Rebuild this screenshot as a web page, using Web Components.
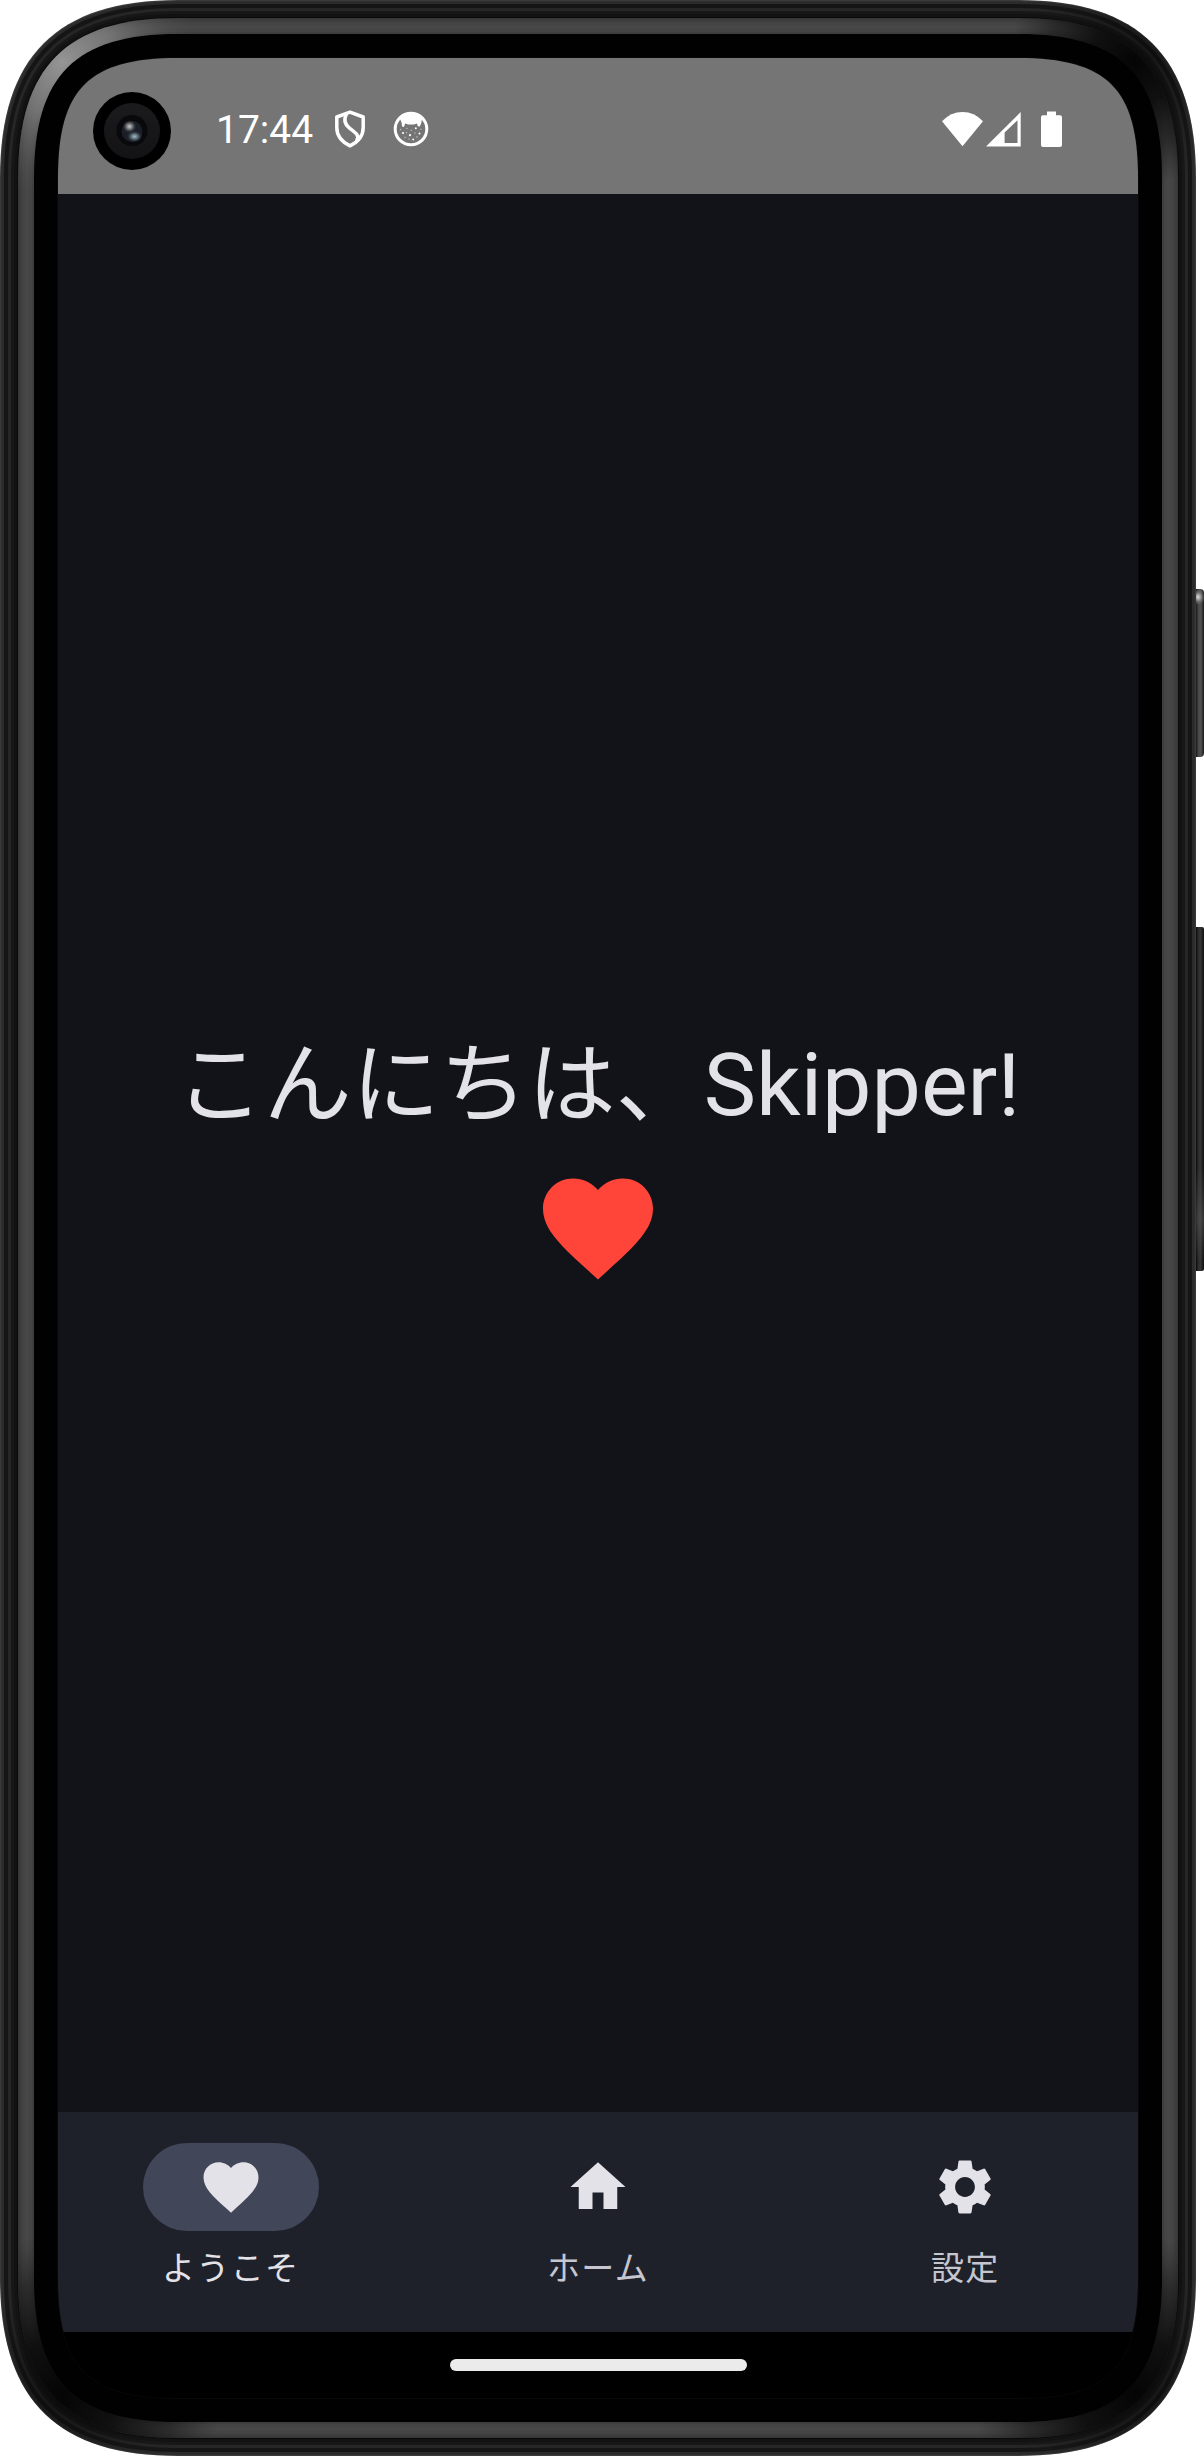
<!DOCTYPE html>
<html lang="ja">
<head>
<meta charset="utf-8">
<title>Skipper</title>
<style>
html,body{margin:0;background:#fff}
body{width:1204px;height:2456px;overflow:hidden;font-family:Roboto,"Noto Sans CJK JP",sans-serif}
</style>
</head>
<body>
<phone-device>
  <status-bar time="17:44"></status-bar>
  <welcome-view>こんにちは、Skipper!</welcome-view>
  <nav-bar>
    <nav-item icon="heart" selected>ようこそ</nav-item>
    <nav-item icon="home">ホーム</nav-item>
    <nav-item icon="gear">設定</nav-item>
  </nav-bar>
  <gesture-bar></gesture-bar>
</phone-device>
<script>
const ICONS = {
  heart: 'M12 21.35l-1.45-1.32C5.4 15.36 2 12.28 2 8.5 2 5.42 4.42 3 7.5 3c1.74 0 3.41.81 4.5 2.09C13.09 3.81 14.76 3 16.5 3 19.58 3 22 5.42 22 8.5c0 3.78-3.4 6.86-8.55 11.54L12 21.35z',
  home: 'M10 20v-6h4v6h5v-8h3L12 3 2 12h3v8z',
  gear: 'M19.14 12.94c.04-.3.06-.61.06-.94 0-.32-.02-.64-.07-.94l2.03-1.58c.18-.14.23-.41.12-.61l-1.92-3.32c-.12-.22-.37-.29-.59-.22l-2.39.96c-.5-.38-1.03-.7-1.62-.94l-.36-2.54c-.04-.24-.24-.41-.48-.41h-3.84c-.24 0-.43.17-.47.41l-.36 2.54c-.59.24-1.13.57-1.62.94l-2.39-.96c-.22-.08-.47 0-.59.22L2.74 8.87c-.12.21-.08.47.12.61l2.03 1.58c-.05.3-.09.63-.09.94s.02.64.07.94l-2.03 1.58c-.18.14-.23.41-.12.61l1.92 3.32c.12.22.37.29.59.22l2.39-.96c.5.38 1.03.7 1.62.94l.36 2.54c.05.24.24.41.48.41h3.84c.24 0 .44-.17.47-.41l.36-2.54c.59-.24 1.13-.56 1.62-.94l2.39.96c.22.08.47 0 .59-.22l1.92-3.32c.12-.22.07-.47-.12-.61l-2.01-1.58zM12 15.6c-1.98 0-3.6-1.62-3.6-3.6s1.62-3.6 3.6-3.6 3.6 1.62 3.6 3.6-1.62 3.6-3.6 3.6z'
};

/* Outline of the case inset by d, with continuous-curvature corners. */
function outline(d, ox = 0, oy = 0) {
  const W = 1196, H = 2456, l = d - ox, t = d - oy, r = W - d - ox, b = H - d - oy;
  const R = 178 - d, m = 43.5 - 0.293 * d, k = R * (1 - (4 - 8 * m / R) / 3);
  return `M${l} ${t+R}C${l} ${t+k} ${l+k} ${t} ${l+R} ${t}H${r-R}C${r-k} ${t} ${r} ${t+k} ${r} ${t+R}V${b-R}C${r} ${b-k} ${r-k} ${b} ${r-R} ${b}H${l+R}C${l+k} ${b} ${l} ${b-k} ${l} ${b-R}Z`;
}
function define(name, render) {
  customElements.define(name, class extends HTMLElement {
    connectedCallback() {
      if (!this.shadowRoot) this.attachShadow({mode: 'open'}).innerHTML = render(this);
    }
  });
}

define('phone-frame', () => {
  const bands = [[0,'#3a3a3a'],[1.2,'#2b2b2b'],[4,'#151515'],[8,'#262626'],[11,'#171717'],[14,'#121212'],[17,'#0a0a0a']];
  const ring = [[18,'#383838'],[19.5,'#3e3e3e'],[22,'#444'],[25,'#474747'],[29,'#444'],[32,'#3e3e3e']];
  const draw = a => a.map(([d, c]) => `<path d="${outline(d)}" fill="${c}"/>`).join('');
  return `<style>:host{display:block}svg{display:block}</style>
  <svg width="1196" height="2456" viewBox="0 0 1196 2456">
    <defs>
      <radialGradient id="lt"><stop offset="0" stop-color="#999" stop-opacity=".95"/><stop offset=".4" stop-color="#888" stop-opacity=".7"/><stop offset="1" stop-color="#555" stop-opacity="0"/></radialGradient>
      <radialGradient id="dk"><stop offset="0" stop-color="#050505"/><stop offset=".35" stop-color="#090909" stop-opacity=".88"/><stop offset=".7" stop-color="#151515" stop-opacity=".55"/><stop offset="1" stop-color="#222" stop-opacity="0"/></radialGradient>
      <clipPath id="ringclip"><path d="${outline(18)}"/></clipPath>
      <clipPath id="case"><path d="${outline(0)}"/></clipPath>
    </defs>
    ${draw(bands)}
    <g clip-path="url(#case)" opacity=".45">
      <circle cx="1148" cy="48" r="130" fill="url(#dk)"/><circle cx="48" cy="2408" r="130" fill="url(#dk)"/><circle cx="1148" cy="2408" r="130" fill="url(#dk)"/>
    </g>
    ${draw(ring)}
    <g clip-path="url(#ringclip)">
      <circle cx="62" cy="62" r="135" fill="url(#lt)"/>
      <circle cx="1134" cy="62" r="125" fill="url(#dk)"/>
      <circle cx="62" cy="2394" r="160" fill="url(#dk)"/>
      <circle cx="1134" cy="2394" r="160" fill="url(#dk)"/>
    </g>
    <path d="${outline(34)}" fill="#010101"/>
    <path d="${outline(57.5)}" fill="#000" stroke="#0a0a0a" stroke-width=".8"/>
  </svg>`;
});

define('side-key', el => `<style>
  :host{display:block;width:8px;border-radius:0 4px 4px 0;box-sizing:border-box}
  :host([kind=power]){height:168px;background:radial-gradient(ellipse 7px 8px at 2px 8px,#ddd,#8888 60%,transparent),linear-gradient(90deg,#222 0 1px,#464848 2px,#505252 5px,#2a2a2a 7px,#181818)}
  :host([kind=volume]){height:344px;border-radius:0 2px 2px 0;background:linear-gradient(180deg,transparent 70%,#6666 85%,transparent 97%),linear-gradient(90deg,#111 0 1px,#2b2c2c 2px,#343536 5px,#222 6px,#111)}
</style>`);

define('phone-device', () => `<style>
  :host{display:flex;width:1204px;height:2456px}
  .case{display:grid;width:1196px;height:2456px}
  .case>*{grid-area:1/1}
  .screen{display:flex;flex-direction:column;margin:58px;width:1080px;height:2340px;clip-path:path("${outline(58,58,58)}")}
  .keys{display:flex;flex-direction:column;gap:170px;padding-top:589px;width:8px;box-sizing:border-box}
</style>
<div class="case"><phone-frame></phone-frame><div class="screen"><slot></slot></div></div>
<div class="keys"><side-key kind="power"></side-key><side-key kind="volume"></side-key></div>`);

define('camera-hole', () => `<style>:host{display:block}svg{display:block}</style>
<svg width="78" height="78" viewBox="0 0 78 78">
  <defs><radialGradient id="a"><stop offset="0" stop-color="#c9cacc"/><stop offset=".4" stop-color="#8d8f92" stop-opacity=".85"/><stop offset="1" stop-color="#333" stop-opacity="0"/></radialGradient>
  <radialGradient id="b"><stop offset="0" stop-color="#a3bac2"/><stop offset=".45" stop-color="#637a84" stop-opacity=".85"/><stop offset="1" stop-color="#223" stop-opacity="0"/></radialGradient>
  <linearGradient id="c" x2="0" y2="1"><stop stop-color="#1b1b1d"/><stop offset="1" stop-color="#131315"/></linearGradient></defs>
  <circle cx="39" cy="39" r="39"/><circle cx="39" cy="39" r="28" fill="url(#c)"/><circle cx="39" cy="38.5" r="15.5" fill="#09090b"/>
  <circle cx="39" cy="39.5" r="10.5" fill="#1a1e26"/>
  <ellipse cx="36.5" cy="34.5" rx="7" ry="6.5" fill="url(#a)"/><ellipse cx="41.5" cy="44.5" rx="8" ry="6" fill="url(#b)"/>
</svg>`);

define('status-bar', el => `<style>
  :host{display:flex;align-items:center;box-sizing:border-box;height:136px;padding:8px 76px 0 35px;background:#757575;color:#fff}
  camera-hole{margin:2px 45px 0 0}
  time{font-size:39px;line-height:46px}
  svg{display:block;flex:none}
  .shield{margin:0 0 3px 21px}.app{margin:0 0 2px 27px}
  .sys{display:flex;margin:0 0 2px auto;align-items:center}
  .cell{margin-left:3px}.bat{margin-left:20px}
</style>
<camera-hole></camera-hole><time>${el.getAttribute('time')}</time>
<svg class="shield" width="32" height="38" viewBox="0 0 32 38" fill="none" stroke="#fff" stroke-width="3.5" stroke-linejoin="round" stroke-linecap="round">
  <path d="M16 2.200L29.200 7V17.500C29.200 26 24 32 16 35.800C8 32 2.800 26 2.800 17.500V7Z"/>
  <path d="M12.300 4.500C9.500 9.500 10.500 14 15.500 18.200C23 23.800 25.500 26 22.800 30.500"/>
</svg>
<svg class="app" width="36" height="36" viewBox="0 0 36 36">
  <circle cx="18" cy="18" r="15.800" fill="none" stroke="#fff" stroke-width="3"/>
  <path d="M7 8Q18-4 29 8L28.200 12.200L26.800 15.600L24.800 15.200L24 12.400Q18 14.800 12.200 12.400L11 15.900L9 15.500L8.600 11.800Z" fill="#fff"/>
  <g fill="#fff"><circle cx="10" cy="22" r="1.1"/><circle cx="17" cy="24.200" r="1.1"/><circle cx="22.800" cy="17.200" r="1"/><circle cx="26.500" cy="22.500" r="1"/><circle cx="20.200" cy="28.500" r=".9"/></g>
  <g fill="#bbb"><circle cx="14" cy="17.500" r=".7"/><circle cx="18.200" cy="19.200" r=".7"/><circle cx="13.500" cy="21.500" r=".7"/><circle cx="22" cy="22" r=".7"/><circle cx="12" cy="26.500" r=".8"/><circle cx="24" cy="26" r=".8"/><circle cx="28" cy="18.200" r=".7"/><circle cx="7.500" cy="18.500" r=".7"/><circle cx="16" cy="28" r=".7"/></g>
</svg>
<div class="sys">
  <svg width="41" height="36" viewBox="0 0 41 36"><path d="M20.5 35.3L0 10.2Q8.8 1 20.5 1Q32.200 1 41 10.200Z" fill="#fff"/></svg>
  <svg class="cell" width="35" height="36" viewBox="0 0 35 36"><path fill="#fff" fill-rule="evenodd" d="M0 35.400L34.700 1V35.400ZM18.600 21.500V32H31.500V9.200Z"/></svg>
  <svg class="bat" width="21" height="36" viewBox="0 0 21 36"><path fill="#fff" d="M6 .5H15V4.200H19Q21 4.200 21 6.200V34Q21 36 19 36H2Q0 36 0 34V6.200Q0 4.200 2 4.200H6Z"/></svg>
</div>`);

define('welcome-view', () => `<style>
  :host{display:flex;flex:1;flex-direction:column;align-items:center;justify-content:center;background:#121318;color:#e3e2e9}
  h1{margin:0 0 3.5px;font-size:88px;font-weight:400;line-height:146px;white-space:nowrap}
  svg{display:block}
</style>
<h1><slot></slot></h1>
<svg width="132" height="132" viewBox="0 0 24 24" fill="#ff453a"><path d="${ICONS.heart}"/></svg>`);

define('nav-bar', () => `<style>
  :host{display:grid;grid-template-columns:repeat(3,1fr);column-gap:22px;box-sizing:border-box;height:220px;padding-top:31px;background:#1f212a}
</style><slot></slot>`);

define('nav-item', el => `<style>
  :host{display:flex;flex-direction:column;align-items:center;gap:16px;color:#c5c6d0}
  :host([selected]){color:#e3e2e9}
  .pill{display:flex;align-items:center;justify-content:center;width:176px;height:88px;border-radius:44px}
  :host([selected]) .pill{background:#424659}
  svg{display:block}
  .label{font-size:33px;line-height:44px;letter-spacing:1.375px}
</style>
<div class="pill"><svg width="66" height="66" viewBox="0 0 24 24" fill="#e3e2e9"><path d="${ICONS[el.getAttribute('icon')]}"/></svg></div>
<div class="label"><slot></slot></div>`);

define('gesture-bar', () => `<style>
  :host{display:flex;justify-content:center;box-sizing:border-box;height:66px;padding-top:27px;background:#000}
  div{width:297px;height:12px;border-radius:6px;background:#ebebeb}
</style><div></div>`);
</script>
</body>
</html>
